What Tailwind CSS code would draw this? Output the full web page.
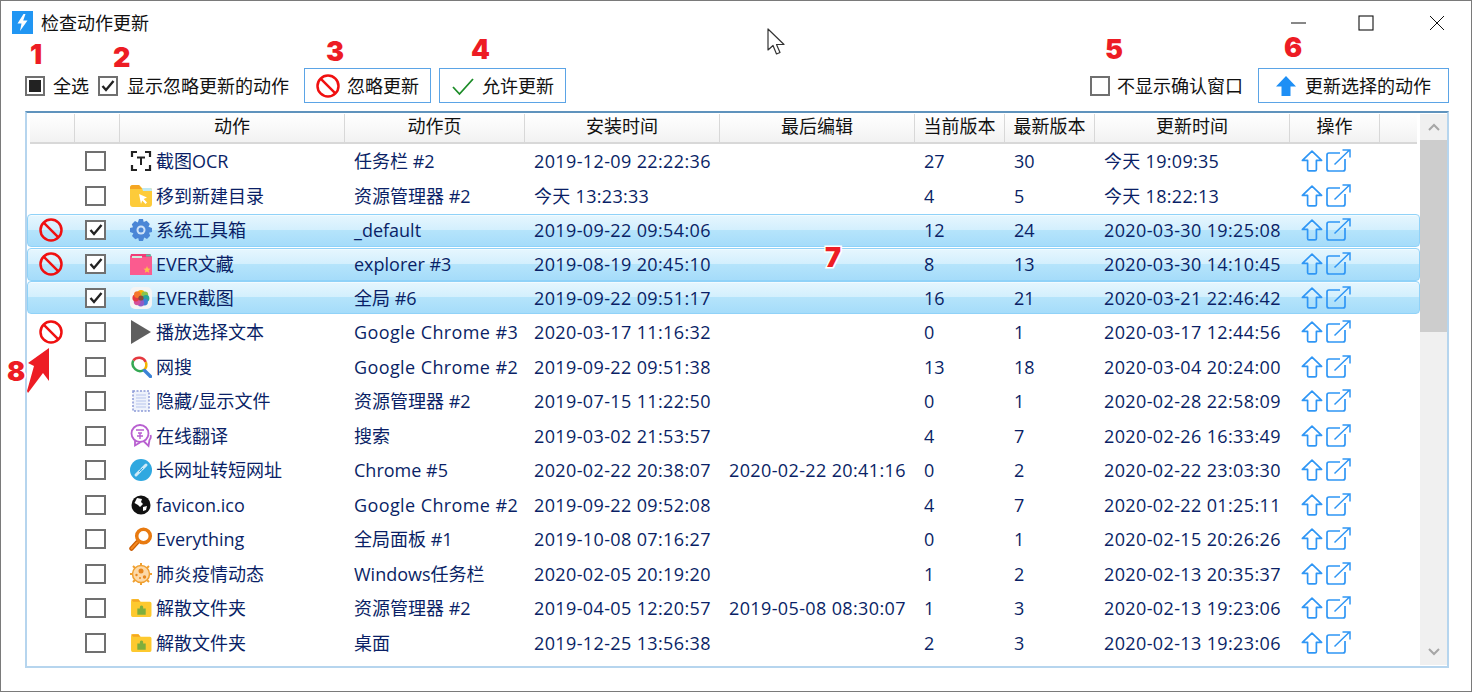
<!DOCTYPE html>
<html lang="zh">
<head>
<meta charset="utf-8">
<script src="https://cdn.jsdelivr.net/npm/@tailwindcss/browser@4"></script>
</head>
<body class="bg-white">
<svg width="0" height="0" class="absolute">
  <defs>
    <symbol id="ban" viewBox="0 0 24 24"><circle cx="12" cy="12" r="10.500" fill="none" stroke="#f01010" stroke-width="2.500"/><path d="M4.600 4.600 19.400 19.400" stroke="#f01010" stroke-width="2.500"/></symbol>
    <symbol id="up" viewBox="0 0 22 22"><path d="M11 1.200 20.600 10.400H15.400V19.400Q15.400 20.800 14 20.800H8Q6.600 20.800 6.600 19.400V10.400H1.400Z" fill="none" stroke="#2f96f5" stroke-width="1.700" stroke-linejoin="round"/></symbol>
    <symbol id="out" viewBox="0 0 25 24"><path d="M14 4H3Q1 4 1 6V20Q1 22 3 22H17Q19 22 19 20V10" fill="none" stroke="#2f96f5" stroke-width="1.700"/><path d="M8.500 15.500 23 1.500M16.500 1H24V8.500" fill="none" stroke="#2f96f5" stroke-width="1.500"/></symbol>
    <symbol id="puzzle" viewBox="0 0 21 19"><path d="M1 3Q1 1 3 1H8L10 3.500H19Q20.500 3.500 20.500 5V16.500Q20.500 18 19 18H2.500Q1 18 1 16.500Z" fill="#fdc92f"/><path d="M1 1.500H8L10 3.500H3Z" fill="#f5a623"/><path d="M7 10H9.500Q9 7 11 7T12.500 10H15V16H7Z" fill="#7fae3c"/></symbol>
  </defs>
</svg>

<div class="relative w-[1472px] h-[692px] overflow-hidden border border-[#7a7a7a] bg-white text-[18px] leading-[24px] text-[#111] [font-family:'Open_Sans','Noto_Sans_CJK_SC',sans-serif]">

  <!-- title bar -->
  <header class="flex items-center h-[43px] pl-[11px]">
    <span class="flex items-center justify-center w-[21px] h-[23px] bg-[#2196f3] -mt-[1px]">
      <svg width="11" height="17" viewBox="0 0 11 17"><path d="M6.500 0 0.500 9.500H4.500L3 17 10.500 6.500H6.200L8.500 0Z" fill="#fff"/></svg>
    </span>
    <span class="ml-[8px]">检查动作更新</span>
    <div class="ml-auto flex items-center mr-[26px]">
      <svg width="16" height="16" viewBox="0 0 16 16"><path d="M1 8H16" stroke="#111" stroke-width="1"/></svg>
      <svg width="16" height="16" viewBox="0 0 16 16" class="ml-[52px]"><rect x="1" y="1" width="14" height="14" fill="none" stroke="#111" stroke-width="1.100"/></svg>
      <svg width="16" height="16" viewBox="0 0 16 16" class="ml-[55px]"><path d="M1 1 15 15M15 1 1 15" stroke="#111" stroke-width="1"/></svg>
    </div>
  </header>

  <!-- toolbar -->
  <div class="flex items-center h-[35px] mt-[24px] pl-[24px] pr-[22px]">
    <label class="flex items-center"><span class="flex items-center justify-center w-[20px] h-[20px] border-2 border-[#707070] bg-white"><span class="w-[12px] h-[12px] bg-[#222]"></span></span><span class="ml-[8px]">全选</span></label>
    <label class="flex items-center ml-[9px]"><span class="flex items-center justify-center w-[20px] h-[20px] border-2 border-[#707070] bg-white"><svg width="14" height="12" viewBox="0 0 14 12"><path d="M1.500 6 5 10 12.500 1" fill="none" stroke="#222" stroke-width="2.400"/></svg></span><span class="ml-[9px]">显示忽略更新的动作</span></label>
    <button class="flex items-center h-[35px] w-[127px] ml-[15px] pl-[11px] border border-[#5ba4e6] bg-white"><svg width="24" height="24"><use href="#ban"/></svg><span class="ml-[7px]">忽略更新</span></button>
    <button class="flex items-center h-[35px] w-[127px] ml-[8px] pl-[11px] border border-[#5ba4e6] bg-white"><svg width="24" height="24" viewBox="0 0 24 24"><path d="M2 13 8.500 20 22 5" fill="none" stroke="#1c8c28" stroke-width="1.800"/></svg><span class="ml-[7px]">允许更新</span></button>
    <label class="flex items-center ml-auto"><span class="w-[20px] h-[20px] border-2 border-[#707070] bg-white"></span><span class="ml-[7px]">不显示确认窗口</span></label>
    <button class="flex items-center h-[35px] w-[191px] ml-[15px] pl-[17px] border border-[#5ba4e6] bg-white"><svg width="20" height="20" viewBox="0 0 20 20"><path d="M10 0 20 10.500H14.500V20H5.500V10.500H0Z" fill="#1e8ff5"/></svg><span class="ml-[9px]">更新选择的动作</span></button>
  </div>

  <!-- table -->
  <section class="relative flex w-[1424px] h-[557px] ml-[24px] mt-[8px] border-2 border-[#b6d5ee] border-t-[#5f93bd] text-[#0a1f66]">
    <div class="flex-1 min-w-0 pl-[3px] pt-[1px]">
      <div class="flex h-[30px] mr-[3px] border-b-2 border-[#d8d8d8] bg-gradient-to-b from-white to-[#f2f2f2] text-[#111] text-center">
        <div class="w-[45px] border-r border-[#d8d8d8]"></div>
        <div class="w-[45px] border-r border-[#d8d8d8]"></div>
        <div class="w-[225px] border-r border-[#d8d8d8]">动作</div>
        <div class="w-[180px] border-r border-[#d8d8d8]">动作页</div>
        <div class="w-[195px] border-r border-[#d8d8d8]">安装时间</div>
        <div class="w-[195px] border-r border-[#d8d8d8]">最后编辑</div>
        <div class="w-[90px] border-r border-[#d8d8d8]">当前版本</div>
        <div class="w-[90px] border-r border-[#d8d8d8]">最新版本</div>
        <div class="w-[195px] border-r border-[#d8d8d8]">更新时间</div>
        <div class="w-[90px] border-r border-[#d8d8d8]">操作</div>
      </div>

      <div class="flex items-center h-[34.5px]"><div class="w-[45px]"></div><div class="w-[45px] pl-[10px]"><span class="block w-[21px] h-[20px] border-2 border-[#707070] bg-white"></span></div><div class="flex items-center w-[225px] pl-[10px]"><svg width="22" height="22" viewBox="0 0 22 22" class="shrink-0"><path d="M2 7V2H7M15 2H20V7M2 15V20H7M15 20H20V15" fill="none" stroke="#222" stroke-width="2.200"/><path d="M7 7.500H15M11 7.500V15" fill="none" stroke="#222" stroke-width="2"/></svg><span class="ml-[4px]">截图OCR</span></div><div class="w-[180px] pl-[9px] whitespace-nowrap overflow-hidden">任务栏 #2</div><div class="w-[195px] pl-[9px] tracking-[0.37px]">2019-12-09 22:22:36</div><div class="w-[195px] pl-[9px]"></div><div class="w-[90px] pl-[9px]">27</div><div class="w-[90px] pl-[9px]">30</div><div class="w-[195px] pl-[9px] tracking-[0.3px]">今天 19:09:35</div><div class="flex items-center w-[90px] pl-[11px]"><svg width="22" height="22"><use href="#up"/></svg><svg width="25" height="24" class="ml-[3px]"><use href="#out"/></svg></div></div>

      <div class="flex items-center h-[34.5px]"><div class="w-[45px]"></div><div class="w-[45px] pl-[10px]"><span class="block w-[21px] h-[20px] border-2 border-[#707070] bg-white"></span></div><div class="flex items-center w-[225px] pl-[10px]"><svg width="22" height="22" viewBox="0 0 22 22" class="shrink-0"><path d="M0 3Q0 0 3 0H9L12 3H20Q22 3 22 5V19Q22 22 19 22H3Q0 22 0 19Z" fill="#fdcb3a"/><path d="M0 3Q0 0 3 0H9L12 4H0Z" fill="#f5a623"/><path d="M12 3H20Q22 3 22 5V6H13Z" fill="#bfe8f2"/><path d="M9 9 17 12.500 13.700 14 17 17.500 15.500 19 12.200 15.500 11 19Z" fill="#fff"/></svg><span class="ml-[4px]">移到新建目录</span></div><div class="w-[180px] pl-[9px] whitespace-nowrap overflow-hidden">资源管理器 #2</div><div class="w-[195px] pl-[9px] tracking-[0.3px]">今天 13:23:33</div><div class="w-[195px] pl-[9px]"></div><div class="w-[90px] pl-[9px]">4</div><div class="w-[90px] pl-[9px]">5</div><div class="w-[195px] pl-[9px] tracking-[0.3px]">今天 18:22:13</div><div class="flex items-center w-[90px] pl-[11px]"><svg width="22" height="22"><use href="#up"/></svg><svg width="25" height="24" class="ml-[3px]"><use href="#out"/></svg></div></div>

      <div class="flex items-center h-[33px] my-[0.75px] -ml-[3px] pl-[2px] rounded-[4px] border border-[#90d2f8] bg-[linear-gradient(180deg,#e6f6fe_0%,#d2effd_50%,#b5e4fb_50%,#a5dcfa_100%)] shadow-[inset_0_1px_0_#ffffff80]"><div class="flex justify-center w-[45px] pr-[3px]"><svg width="24" height="24"><use href="#ban"/></svg></div><div class="w-[45px] pl-[10px]"><span class="flex items-center justify-center w-[21px] h-[20px] border-2 border-[#707070] bg-white"><svg width="14" height="12" viewBox="0 0 14 12"><path d="M1.500 6 5 10 12.500 1" fill="none" stroke="#222" stroke-width="2.400"/></svg></span></div><div class="flex items-center w-[225px] pl-[10px]"><svg width="22" height="22" viewBox="0 0 22 22" class="shrink-0"><path d="M9 0H13L13.700 3 16.600 1.800 19.800 5 18.500 7.800 22 9V13L19 13.800 20.200 16.800 17 20 14.200 18.600 13 22H9L8.200 19 5.300 20.200 2 17 3.400 14.200 0 13V9L3 8.200 1.800 5.300 5 2 7.800 3.400Z" fill="#4a86d6"/><circle cx="11" cy="11" r="4.500" fill="#cfe3f8"/><circle cx="11" cy="11" r="2.500" fill="#4a86d6"/></svg><span class="ml-[4px]">系统工具箱</span></div><div class="w-[180px] pl-[9px] whitespace-nowrap overflow-hidden">_default</div><div class="w-[195px] pl-[9px] tracking-[0.37px]">2019-09-22 09:54:06</div><div class="w-[195px] pl-[9px]"></div><div class="w-[90px] pl-[9px]">12</div><div class="w-[90px] pl-[9px]">24</div><div class="w-[195px] pl-[9px] tracking-[0.37px]">2020-03-30 19:25:08</div><div class="flex items-center w-[90px] pl-[11px]"><svg width="22" height="22"><use href="#up"/></svg><svg width="25" height="24" class="ml-[3px]"><use href="#out"/></svg></div></div>

      <div class="flex items-center h-[33px] my-[0.75px] -ml-[3px] pl-[2px] rounded-[4px] border border-[#90d2f8] bg-[linear-gradient(180deg,#e6f6fe_0%,#d2effd_50%,#b5e4fb_50%,#a5dcfa_100%)] shadow-[inset_0_1px_0_#ffffff80]"><div class="flex justify-center w-[45px] pr-[3px]"><svg width="24" height="24"><use href="#ban"/></svg></div><div class="w-[45px] pl-[10px]"><span class="flex items-center justify-center w-[21px] h-[20px] border-2 border-[#707070] bg-white"><svg width="14" height="12" viewBox="0 0 14 12"><path d="M1.500 6 5 10 12.500 1" fill="none" stroke="#222" stroke-width="2.400"/></svg></span></div><div class="flex items-center w-[225px] pl-[10px]"><svg width="22" height="22" viewBox="0 0 22 22" class="shrink-0"><path d="M0 4H22V22H0Z" fill="#fb5b8f"/><path d="M1 1H20L22 4H0Z" fill="#f03c78"/><path d="M2 3H12V5H2Z" fill="#cfeee0"/><path d="M16 1.500H21V3.500H16Z" fill="#53c7a8"/><path d="M17 13 18 15.500 20.500 15.700 18.600 17.300 19.200 19.800 17 18.400 14.800 19.800 15.400 17.300 13.500 15.700 16 15.500Z" fill="#fbc04a"/></svg><span class="ml-[4px]">EVER文藏</span></div><div class="w-[180px] pl-[9px] whitespace-nowrap overflow-hidden">explorer #3</div><div class="w-[195px] pl-[9px] tracking-[0.37px]">2019-08-19 20:45:10</div><div class="w-[195px] pl-[9px]"></div><div class="w-[90px] pl-[9px]">8</div><div class="w-[90px] pl-[9px]">13</div><div class="w-[195px] pl-[9px] tracking-[0.37px]">2020-03-30 14:10:45</div><div class="flex items-center w-[90px] pl-[11px]"><svg width="22" height="22"><use href="#up"/></svg><svg width="25" height="24" class="ml-[3px]"><use href="#out"/></svg></div></div>

      <div class="flex items-center h-[33px] my-[0.75px] -ml-[3px] pl-[2px] rounded-[4px] border border-[#90d2f8] bg-[linear-gradient(180deg,#e6f6fe_0%,#d2effd_50%,#b5e4fb_50%,#a5dcfa_100%)] shadow-[inset_0_1px_0_#ffffff80]"><div class="w-[45px]"></div><div class="w-[45px] pl-[10px]"><span class="flex items-center justify-center w-[21px] h-[20px] border-2 border-[#707070] bg-white"><svg width="14" height="12" viewBox="0 0 14 12"><path d="M1.500 6 5 10 12.500 1" fill="none" stroke="#222" stroke-width="2.400"/></svg></span></div><div class="flex items-center w-[225px] pl-[10px]"><svg width="22" height="22" viewBox="0 0 22 22" class="shrink-0"><rect width="22" height="22" rx="5" fill="#f4f4f4"/><circle cx="11" cy="6.500" r="3.400" fill="#f4b400"/><circle cx="14.800" cy="7.800" r="3.400" fill="#8bc34a"/><circle cx="16" cy="11.500" r="3.400" fill="#26a69a"/><circle cx="14.500" cy="15" r="3.400" fill="#3f7fd6"/><circle cx="10.800" cy="16" r="3.400" fill="#8e5bc7"/><circle cx="7.200" cy="14.800" r="3.400" fill="#d44f9c"/><circle cx="5.800" cy="11" r="3.400" fill="#e5393f"/><circle cx="7.400" cy="7.600" r="3.400" fill="#f4762c"/><circle cx="11" cy="11" r="2.600" fill="#8a4a3a"/></svg><span class="ml-[4px]">EVER截图</span></div><div class="w-[180px] pl-[9px] whitespace-nowrap overflow-hidden">全局 #6</div><div class="w-[195px] pl-[9px] tracking-[0.37px]">2019-09-22 09:51:17</div><div class="w-[195px] pl-[9px]"></div><div class="w-[90px] pl-[9px]">16</div><div class="w-[90px] pl-[9px]">21</div><div class="w-[195px] pl-[9px] tracking-[0.37px]">2020-03-21 22:46:42</div><div class="flex items-center w-[90px] pl-[11px]"><svg width="22" height="22"><use href="#up"/></svg><svg width="25" height="24" class="ml-[3px]"><use href="#out"/></svg></div></div>

      <div class="flex items-center h-[34.5px]"><div class="flex justify-center w-[45px] pr-[3px]"><svg width="24" height="24"><use href="#ban"/></svg></div><div class="w-[45px] pl-[10px]"><span class="block w-[21px] h-[20px] border-2 border-[#707070] bg-white"></span></div><div class="flex items-center w-[225px] pl-[10px]"><svg width="22" height="24" viewBox="0 0 22 24" class="shrink-0"><path d="M1 0 21 12 1 24Z" fill="#5f5f5f"/></svg><span class="ml-[4px]">播放选择文本</span></div><div class="w-[173px] mr-[7px] pl-[9px] whitespace-nowrap overflow-hidden tracking-[0.4px]">Google Chrome #3</div><div class="w-[195px] pl-[9px] tracking-[0.37px]">2020-03-17 11:16:32</div><div class="w-[195px] pl-[9px]"></div><div class="w-[90px] pl-[9px]">0</div><div class="w-[90px] pl-[9px]">1</div><div class="w-[195px] pl-[9px] tracking-[0.37px]">2020-03-17 12:44:56</div><div class="flex items-center w-[90px] pl-[11px]"><svg width="22" height="22"><use href="#up"/></svg><svg width="25" height="24" class="ml-[3px]"><use href="#out"/></svg></div></div>

      <div class="flex items-center h-[34.5px]"><div class="w-[45px]"></div><div class="w-[45px] pl-[10px]"><span class="block w-[21px] h-[20px] border-2 border-[#707070] bg-white"></span></div><div class="flex items-center w-[225px] pl-[10px]"><svg width="22" height="22" viewBox="0 0 22 22" class="shrink-0"><path d="M3.300 4.500A7.500 7.500 0 0 1 15.800 6" fill="none" stroke="#e5393f" stroke-width="2.500"/><path d="M15.800 6A7.500 7.500 0 0 1 14 14" fill="none" stroke="#f4b400" stroke-width="2.500"/><path d="M3.300 4.500A7.500 7.500 0 0 0 14 14" fill="none" stroke="#34a853" stroke-width="2.500"/><path d="M14.500 14.500 20.500 20.500" stroke="#3b82d6" stroke-width="3.400" stroke-linecap="round"/></svg><span class="ml-[4px]">网搜</span></div><div class="w-[173px] mr-[7px] pl-[9px] whitespace-nowrap overflow-hidden tracking-[0.4px]">Google Chrome #2</div><div class="w-[195px] pl-[9px] tracking-[0.37px]">2019-09-22 09:51:38</div><div class="w-[195px] pl-[9px]"></div><div class="w-[90px] pl-[9px]">13</div><div class="w-[90px] pl-[9px]">18</div><div class="w-[195px] pl-[9px] tracking-[0.37px]">2020-03-04 20:24:00</div><div class="flex items-center w-[90px] pl-[11px]"><svg width="22" height="22"><use href="#up"/></svg><svg width="25" height="24" class="ml-[3px]"><use href="#out"/></svg></div></div>

      <div class="flex items-center h-[34.5px]"><div class="w-[45px]"></div><div class="w-[45px] pl-[10px]"><span class="block w-[21px] h-[20px] border-2 border-[#707070] bg-white"></span></div><div class="flex items-center w-[225px] pl-[10px]"><svg width="22" height="22" viewBox="0 0 22 22" class="shrink-0"><rect x="3" y="1" width="16" height="20" fill="#eef2fb" stroke="#8c9bd8" stroke-width="1.500" stroke-dasharray="2 1.500"/><path d="M6 5H16M6 8H16M6 11H16M6 14H16M6 17H16" stroke="#b8c6ee" stroke-width="1.200"/></svg><span class="ml-[4px]">隐藏/显示文件</span></div><div class="w-[180px] pl-[9px] whitespace-nowrap overflow-hidden">资源管理器 #2</div><div class="w-[195px] pl-[9px] tracking-[0.37px]">2019-07-15 11:22:50</div><div class="w-[195px] pl-[9px]"></div><div class="w-[90px] pl-[9px]">0</div><div class="w-[90px] pl-[9px]">1</div><div class="w-[195px] pl-[9px] tracking-[0.37px]">2020-02-28 22:58:09</div><div class="flex items-center w-[90px] pl-[11px]"><svg width="22" height="22"><use href="#up"/></svg><svg width="25" height="24" class="ml-[3px]"><use href="#out"/></svg></div></div>

      <div class="flex items-center h-[34.5px]"><div class="w-[45px]"></div><div class="w-[45px] pl-[10px]"><span class="block w-[21px] h-[20px] border-2 border-[#707070] bg-white"></span></div><div class="flex items-center w-[225px] pl-[10px]"><svg width="22" height="24" viewBox="0 0 22 24" class="shrink-0"><circle cx="10" cy="9.500" r="8.500" fill="#fff" stroke="#b85fd0" stroke-width="1.800"/><path d="M5 17 5 21.500 10 18.500M14 17.500 18.500 22 19.500 16A5 5 0 0 0 20.500 11" fill="none" stroke="#b85fd0" stroke-width="1.800"/><path d="M6 6H14M8 9H12M7 12H13M10 9V15" fill="none" stroke="#b85fd0" stroke-width="1.400"/></svg><span class="ml-[4px]">在线翻译</span></div><div class="w-[180px] pl-[9px] whitespace-nowrap overflow-hidden">搜索</div><div class="w-[195px] pl-[9px] tracking-[0.37px]">2019-03-02 21:53:57</div><div class="w-[195px] pl-[9px]"></div><div class="w-[90px] pl-[9px]">4</div><div class="w-[90px] pl-[9px]">7</div><div class="w-[195px] pl-[9px] tracking-[0.37px]">2020-02-26 16:33:49</div><div class="flex items-center w-[90px] pl-[11px]"><svg width="22" height="22"><use href="#up"/></svg><svg width="25" height="24" class="ml-[3px]"><use href="#out"/></svg></div></div>

      <div class="flex items-center h-[34.5px]"><div class="w-[45px]"></div><div class="w-[45px] pl-[10px]"><span class="block w-[21px] h-[20px] border-2 border-[#707070] bg-white"></span></div><div class="flex items-center w-[225px] pl-[10px]"><svg width="22" height="22" viewBox="0 0 22 22" class="shrink-0"><circle cx="11" cy="11" r="11" fill="#2fa8e0"/><path d="M6 16 10 12M12 10 16 6" stroke="#cdeaf8" stroke-width="3" stroke-linecap="round"/><path d="M9 13 13 9" stroke="#2fa8e0" stroke-width="1"/></svg><span class="ml-[4px]">长网址转短网址</span></div><div class="w-[180px] pl-[9px] whitespace-nowrap overflow-hidden">Chrome #5</div><div class="w-[195px] pl-[9px] tracking-[0.37px]">2020-02-22 20:38:07</div><div class="w-[195px] pl-[9px] tracking-[0.37px]">2020-02-22 20:41:16</div><div class="w-[90px] pl-[9px]">0</div><div class="w-[90px] pl-[9px]">2</div><div class="w-[195px] pl-[9px] tracking-[0.37px]">2020-02-22 23:03:30</div><div class="flex items-center w-[90px] pl-[11px]"><svg width="22" height="22"><use href="#up"/></svg><svg width="25" height="24" class="ml-[3px]"><use href="#out"/></svg></div></div>

      <div class="flex items-center h-[34.5px]"><div class="w-[45px]"></div><div class="w-[45px] pl-[10px]"><span class="block w-[21px] h-[20px] border-2 border-[#707070] bg-white"></span></div><div class="flex items-center w-[225px] pl-[10px]"><svg width="22" height="22" viewBox="0 0 22 22" class="shrink-0"><circle cx="11" cy="11" r="9.500" fill="#111"/><path d="M7 4 12 5 11 8 13 10 10 13 8 11 4.500 9ZM13 13 17 12 16 16 13 17Z" fill="#fff"/></svg><span class="ml-[4px]">favicon.ico</span></div><div class="w-[173px] mr-[7px] pl-[9px] whitespace-nowrap overflow-hidden tracking-[0.4px]">Google Chrome #2</div><div class="w-[195px] pl-[9px] tracking-[0.37px]">2019-09-22 09:52:08</div><div class="w-[195px] pl-[9px]"></div><div class="w-[90px] pl-[9px]">4</div><div class="w-[90px] pl-[9px]">7</div><div class="w-[195px] pl-[9px] tracking-[0.37px]">2020-02-22 01:25:11</div><div class="flex items-center w-[90px] pl-[11px]"><svg width="22" height="22"><use href="#up"/></svg><svg width="25" height="24" class="ml-[3px]"><use href="#out"/></svg></div></div>

      <div class="flex items-center h-[34.5px]"><div class="w-[45px]"></div><div class="w-[45px] pl-[10px]"><span class="block w-[21px] h-[20px] border-2 border-[#707070] bg-white"></span></div><div class="flex items-center w-[225px] pl-[10px]"><svg width="24" height="24" viewBox="0 0 24 24" class="shrink-0 -ml-[1px] -mr-[1px]"><path d="M2.500 21.500 8 15.500" stroke="#c85a00" stroke-width="4.500" stroke-linecap="round"/><path d="M2.500 21.500 8 15.500" stroke="#f5891f" stroke-width="2" stroke-linecap="round"/><circle cx="14.500" cy="9" r="6.800" fill="#fff" stroke="#e87a10" stroke-width="3.500"/></svg><span class="ml-[4px]">Everything</span></div><div class="w-[180px] pl-[9px] whitespace-nowrap overflow-hidden">全局面板 #1</div><div class="w-[195px] pl-[9px] tracking-[0.37px]">2019-10-08 07:16:27</div><div class="w-[195px] pl-[9px]"></div><div class="w-[90px] pl-[9px]">0</div><div class="w-[90px] pl-[9px]">1</div><div class="w-[195px] pl-[9px] tracking-[0.37px]">2020-02-15 20:26:26</div><div class="flex items-center w-[90px] pl-[11px]"><svg width="22" height="22"><use href="#up"/></svg><svg width="25" height="24" class="ml-[3px]"><use href="#out"/></svg></div></div>

      <div class="flex items-center h-[34.5px]"><div class="w-[45px]"></div><div class="w-[45px] pl-[10px]"><span class="block w-[21px] h-[20px] border-2 border-[#707070] bg-white"></span></div><div class="flex items-center w-[225px] pl-[10px]"><svg width="22" height="22" viewBox="0 0 22 22" class="shrink-0"><circle cx="11" cy="11" r="8.500" fill="#fcd9a8" stroke="#f0a030" stroke-width="1.500"/><path d="M11 0V3M11 19V22M0 11H3M19 11H22M3 3 5 5M17 17 19 19M19 3 17 5M3 19 5 17" stroke="#f0a030" stroke-width="2"/><circle cx="11" cy="8" r="2.500" fill="#e8871e"/><circle cx="6.500" cy="12" r="1.200" fill="#e8871e"/><circle cx="14.500" cy="14" r="1.700" fill="#e8871e"/><circle cx="10" cy="15" r="1" fill="#e8871e"/></svg><span class="ml-[4px]">肺炎疫情动态</span></div><div class="w-[180px] pl-[9px] whitespace-nowrap overflow-hidden">Windows任务栏</div><div class="w-[195px] pl-[9px] tracking-[0.37px]">2020-02-05 20:19:20</div><div class="w-[195px] pl-[9px]"></div><div class="w-[90px] pl-[9px]">1</div><div class="w-[90px] pl-[9px]">2</div><div class="w-[195px] pl-[9px] tracking-[0.37px]">2020-02-13 20:35:37</div><div class="flex items-center w-[90px] pl-[11px]"><svg width="22" height="22"><use href="#up"/></svg><svg width="25" height="24" class="ml-[3px]"><use href="#out"/></svg></div></div>

      <div class="flex items-center h-[34.5px]"><div class="w-[45px]"></div><div class="w-[45px] pl-[10px]"><span class="block w-[21px] h-[20px] border-2 border-[#707070] bg-white"></span></div><div class="flex items-center w-[225px] pl-[10px]"><svg width="22" height="20" class="shrink-0"><use href="#puzzle"/></svg><span class="ml-[4px]">解散文件夹</span></div><div class="w-[180px] pl-[9px] whitespace-nowrap overflow-hidden">资源管理器 #2</div><div class="w-[195px] pl-[9px] tracking-[0.37px]">2019-04-05 12:20:57</div><div class="w-[195px] pl-[9px] tracking-[0.37px]">2019-05-08 08:30:07</div><div class="w-[90px] pl-[9px]">1</div><div class="w-[90px] pl-[9px]">3</div><div class="w-[195px] pl-[9px] tracking-[0.37px]">2020-02-13 19:23:06</div><div class="flex items-center w-[90px] pl-[11px]"><svg width="22" height="22"><use href="#up"/></svg><svg width="25" height="24" class="ml-[3px]"><use href="#out"/></svg></div></div>

      <div class="flex items-center h-[34.5px]"><div class="w-[45px]"></div><div class="w-[45px] pl-[10px]"><span class="block w-[21px] h-[20px] border-2 border-[#707070] bg-white"></span></div><div class="flex items-center w-[225px] pl-[10px]"><svg width="22" height="20" class="shrink-0"><use href="#puzzle"/></svg><span class="ml-[4px]">解散文件夹</span></div><div class="w-[180px] pl-[9px] whitespace-nowrap overflow-hidden">桌面</div><div class="w-[195px] pl-[9px] tracking-[0.37px]">2019-12-25 13:56:38</div><div class="w-[195px] pl-[9px]"></div><div class="w-[90px] pl-[9px]">2</div><div class="w-[90px] pl-[9px]">3</div><div class="w-[195px] pl-[9px] tracking-[0.37px]">2020-02-13 19:23:06</div><div class="flex items-center w-[90px] pl-[11px]"><svg width="22" height="22"><use href="#up"/></svg><svg width="25" height="24" class="ml-[3px]"><use href="#out"/></svg></div></div>
    </div>

    <!-- scrollbar -->
    <div class="flex flex-col w-[27px] shrink-0 mt-[1px] mb-[1px] bg-[#f0f0f0]">
      <div class="flex items-center justify-center h-[26px]"><svg width="12" height="8" viewBox="0 0 12 8"><path d="M1 7 6 2 11 7" fill="none" stroke="#a6a6a6" stroke-width="2"/></svg></div>
      <div class="h-[192px] bg-[#cdcdcd]"></div>
      <div class="flex-1"></div>
      <div class="flex items-center justify-center h-[26px]"><svg width="12" height="8" viewBox="0 0 12 8"><path d="M1 1 6 6 11 1" fill="none" stroke="#a6a6a6" stroke-width="2"/></svg></div>
    </div>
  </section>

  <!-- annotations on top of the screenshot -->
  <span class="absolute left-[29px] top-[40px] text-[27px] leading-[28px] font-black text-[#ed1c24] [font-family:'Inter',sans-serif] [-webkit-text-stroke:3px_#fff] [paint-order:stroke_fill]">1</span>
  <span class="absolute left-[112px] top-[43px] text-[27px] leading-[28px] font-black text-[#ed1c24] [font-family:'Inter',sans-serif] [-webkit-text-stroke:3px_#fff] [paint-order:stroke_fill]">2</span>
  <span class="absolute left-[325px] top-[37px] text-[27px] leading-[28px] font-black text-[#ed1c24] [font-family:'Inter',sans-serif] [-webkit-text-stroke:3px_#fff] [paint-order:stroke_fill]">3</span>
  <span class="absolute left-[470px] top-[35px] text-[27px] leading-[28px] font-black text-[#ed1c24] [font-family:'Inter',sans-serif] [-webkit-text-stroke:3px_#fff] [paint-order:stroke_fill]">4</span>
  <span class="absolute left-[1104px] top-[35px] text-[27px] leading-[28px] font-black text-[#ed1c24] [font-family:'Inter',sans-serif] [-webkit-text-stroke:3px_#fff] [paint-order:stroke_fill]">5</span>
  <span class="absolute left-[1283px] top-[33px] text-[27px] leading-[28px] font-black text-[#ed1c24] [font-family:'Inter',sans-serif] [-webkit-text-stroke:3px_#fff] [paint-order:stroke_fill]">6</span>
  <span class="absolute left-[824px] top-[243px] text-[27px] leading-[28px] font-black text-[#ed1c24] [font-family:'Inter',sans-serif] [-webkit-text-stroke:3px_#fff] [paint-order:stroke_fill]">7</span>
  <span class="absolute left-[6px] top-[357px] text-[27px] leading-[28px] font-black text-[#ed1c24] [font-family:'Inter',sans-serif] [-webkit-text-stroke:3px_#fff] [paint-order:stroke_fill]">8</span>
  <svg class="absolute left-[25px] top-[347px]" width="26" height="46" viewBox="0 0 26 46"><path d="M23 0 23 33 17 25 2 45 1 43 8 18 2 15Z" fill="#ed1c24"/></svg>
  <svg class="absolute left-[766px] top-[27px]" width="20" height="28" viewBox="0 0 20 28"><path d="M1 1V22L6 17.500 9.500 26 13 24.500 9.500 16.500H17Z" fill="#fff" stroke="#333" stroke-width="1.200" stroke-linejoin="round"/></svg>
</div>
</body>
</html>
